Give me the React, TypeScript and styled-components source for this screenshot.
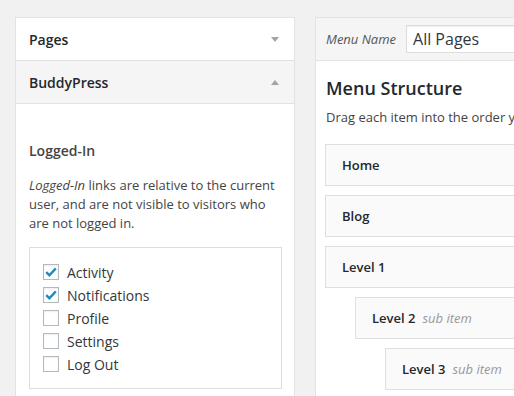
import styled, { createGlobalStyle } from "styled-components";

const GlobalStyle = createGlobalStyle`
  html, body {
    margin: 0;
    padding: 0;
    background: #f1f1f1;
    font-family: "Open Sans", "Noto Sans", sans-serif;
    color: #444;
  }
`;

const loggedInLinks = [
  { label: "Activity", checked: true },
  { label: "Notifications", checked: true },
  { label: "Profile", checked: false },
  { label: "Settings", checked: false },
  { label: "Log Out", checked: false },
];

const menuItems = [
  { title: "Home", depth: 0, sub: false },
  { title: "Blog", depth: 0, sub: false },
  { title: "Level 1", depth: 0, sub: false },
  { title: "Level 2", depth: 1, sub: true },
  { title: "Level 3", depth: 2, sub: true },
];

const Arrow = ({ up }: { up?: boolean }) => (
  <ArrowIcon width="8" height="5" viewBox="0 0 8 5">
    <path d={up ? "M0 5 L4 0 L8 5 Z" : "M0 0 L8 0 L4 5 Z"} fill="#a0a5aa" />
  </ArrowIcon>
);

const Check = () => (
  <CheckMark width="12" height="10" viewBox="0 0 12 10">
    <path
      d="M1.2 5.2 L4.4 8.2 L10.8 1.4"
      fill="none"
      stroke="#1e8cbe"
      strokeWidth="2.4"
    />
  </CheckMark>
);

export default function App() {
  return (
    <>
      <GlobalStyle />
      <Page>
        <Sidebar>
          <SectionHeader>
            <SectionTitle>Pages</SectionTitle>
            <Arrow />
          </SectionHeader>
          <SectionHeader open>
            <SectionTitle>BuddyPress</SectionTitle>
            <Arrow up />
          </SectionHeader>
          <SectionBody>
            <GroupTitle>Logged-In</GroupTitle>
            <Description>
              <em>Logged-In</em> links are relative to the current user, and
              are not visible to visitors who are not logged in.
            </Description>
            <CheckList>
              {loggedInLinks.map((l) => (
                <CheckRow key={l.label}>
                  <Box>{l.checked && <Check />}</Box>
                  <CheckLabel>{l.label}</CheckLabel>
                </CheckRow>
              ))}
            </CheckList>
          </SectionBody>
        </Sidebar>

        <MenuPanel>
          <MenuHeader>
            <MenuNameLabel>Menu Name</MenuNameLabel>
            <MenuNameInput>All Pages</MenuNameInput>
          </MenuHeader>
          <MenuBody>
            <StructureTitle>Menu Structure</StructureTitle>
            <StructureHint>
              Drag each item into the order you prefer. Click the arrow on the
              right of the item to reveal additional configuration options.
            </StructureHint>
            <ItemList>
              {menuItems.map((m) => (
                <MenuItem key={m.title} depth={m.depth}>
                  <ItemTitle>{m.title}</ItemTitle>
                  {m.sub && <SubItem>sub item</SubItem>}
                </MenuItem>
              ))}
            </ItemList>
          </MenuBody>
        </MenuPanel>
      </Page>
    </>
  );
}

const Page = styled.div`
  display: flex;
  gap: 20px;
  padding: 17px 0 0 15px;
  height: 396px;
  box-sizing: border-box;
  overflow: hidden;
`;

const Sidebar = styled.div`
  width: 280px;
  flex-shrink: 0;
  background: #fff;
  border: 1px solid #e2e2e2;
  box-sizing: border-box;
  min-height: 500px;
`;

const SectionHeader = styled.div<{ open?: boolean }>`
  height: 42px;
  display: flex;
  align-items: center;
  justify-content: space-between;
  padding: 0 15px 0 13px;
  border-bottom: 1px solid #e2e2e2;
  background: ${(p) => (p.open ? "#f5f5f5" : "#fff")};
`;

const SectionTitle = styled.div`
  font-size: 14px;
  font-weight: 600;
  color: #23282d;
`;

const ArrowIcon = styled.svg`
  display: block;
`;

const SectionBody = styled.div`
  padding: 37px 12px 0 13px;
`;

const GroupTitle = styled.div`
  font-size: 14px;
  line-height: 20px;
  font-weight: 600;
  color: #444;
`;

const Description = styled.div`
  margin-top: 15px;
  font-size: 13px;
  line-height: 19px;
  color: #444;

  em {
    font-style: italic;
  }
`;

const CheckList = styled.div`
  margin-top: 14px;
  border: 1px solid #dddddd;
  padding: 16px 13px 16px 13px;
  display: flex;
  flex-direction: column;
  gap: 7px;
`;

const CheckRow = styled.div`
  display: flex;
  align-items: center;
  gap: 8px;
  height: 16px;
`;

const Box = styled.div`
  width: 16px;
  height: 16px;
  box-sizing: border-box;
  border: 1px solid #b4b9be;
  background: #fff;
  box-shadow: inset 0 1px 2px rgba(0, 0, 0, 0.07);
  display: flex;
  align-items: center;
  justify-content: center;
`;

const CheckMark = styled.svg`
  display: block;
`;

const CheckLabel = styled.span`
  font-size: 14px;
  color: #32373c;
`;

const MenuPanel = styled.div`
  flex: 1;
  min-width: 260px;
  background: #fff;
  border: 1px solid #e2e2e2;
  min-height: 500px;
`;

const MenuHeader = styled.div`
  height: 42px;
  display: flex;
  align-items: center;
  padding-left: 10px;
  background: #f5f5f5;
  border-bottom: 1px solid #e2e2e2;
`;

const MenuNameLabel = styled.span`
  flex-shrink: 0;
  white-space: nowrap;
  font-size: 13px;
  font-style: italic;
  color: #555;
  margin-right: 10px;
`;

const MenuNameInput = styled.div`
  flex-shrink: 0;
  width: 220px;
  height: 28px;
  box-sizing: border-box;
  border: 1px solid #ddd;
  background: #fff;
  box-shadow: inset 0 1px 2px rgba(0, 0, 0, 0.07);
  padding-left: 6px;
  display: flex;
  align-items: center;
  font-size: 16px;
  color: #32373c;
  white-space: nowrap;
`;

const MenuBody = styled.div`
  padding: 15px 0 0 10px;
`;

const StructureTitle = styled.div`
  font-size: 18px;
  line-height: 24px;
  font-weight: 600;
  color: #23282d;
`;

const StructureHint = styled.div`
  margin-top: 8px;
  font-size: 13px;
  line-height: 19px;
  color: #444;
  white-space: nowrap;
`;

const ItemList = styled.div`
  margin: 17px 0 0 -1px;
  display: flex;
  flex-direction: column;
  gap: 9px;
`;

const MenuItem = styled.div<{ depth: number }>`
  margin-left: ${(p) => p.depth * 30}px;
  width: 380px;
  height: 42px;
  box-sizing: border-box;
  border: 1px solid #dfdfdf;
  background: #fafafa;
  padding-left: 16px;
  display: flex;
  align-items: center;
`;

const ItemTitle = styled.span`
  font-size: 13px;
  font-weight: 600;
  color: #23282d;
`;

const SubItem = styled.span`
  margin-left: 7px;
  font-size: 13px;
  font-style: italic;
  color: #999;
`;
